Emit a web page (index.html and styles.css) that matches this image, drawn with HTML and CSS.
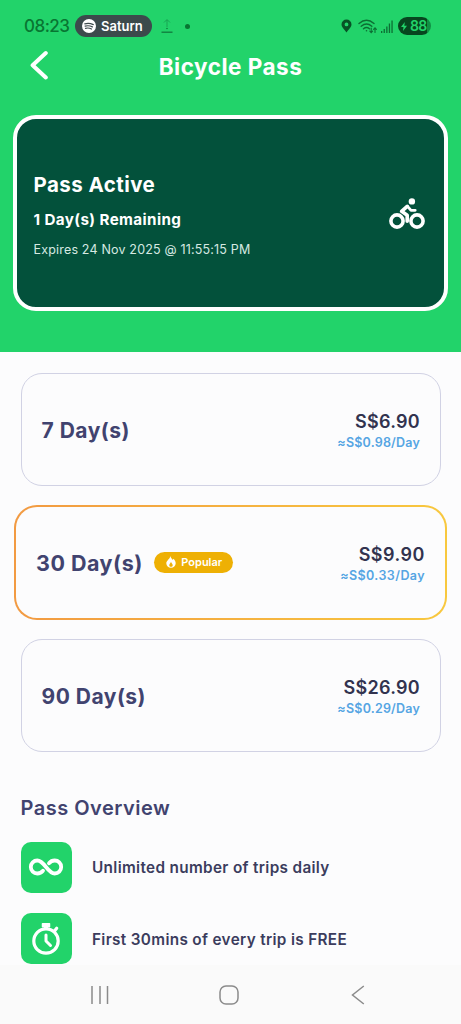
FILE: index.html
```html
<!DOCTYPE html>
<html lang="en">
<head>
<meta charset="utf-8">
<meta name="viewport" content="width=device-width, initial-scale=1">
<title>Bicycle Pass</title>
<link rel="stylesheet" href="styles.css">
</head>
<body>
<div class="screen">
  <header class="hero">
    <div class="status">
      <span class="clock">08:23</span>
      <span class="now-playing">
        <svg width="14" height="14" viewBox="0 0 14 14"><circle cx="7" cy="7" r="7" fill="#fff"/><path d="M2.8 4.8q4.4-1.2 8.5 .8M3.1 7.1q4-1 7.3 .8M3.5 9.3q3.200-.8 6 .7" fill="none" stroke="#3c4a4c" stroke-width="1.2" stroke-linecap="round"/></svg>
        <span class="track">Saturn</span>
      </span>
      <svg class="upload" width="12" height="16" viewBox="0 0 12 16" fill="none" stroke="#107a3d"><path d="M.5 14.200h11" stroke-width="1.300"/><path d="M3 4.500L6 1.500l3 3M6 2v7" stroke-width="1" opacity=".5"/><circle cx="6" cy="10.500" r=".4"/></svg>
      <span class="dot"></span>
      <span class="indicators">
        <svg class="pin" width="11" height="14" viewBox="0 0 11 14"><path fill="#075226" fill-rule="evenodd" d="M5.500 .5a5 5 0 0 1 5 5c0 3-3.300 5-5 8-1.700-3-5-5-5-8a5 5 0 0 1 5-5zm0 3a1.900 1.900 0 1 0 0 3.800 1.900 1.900 0 0 0 0-3.800z"/></svg>
        <svg class="wifi" width="20" height="15" viewBox="0 0 20 15" fill="none" stroke="#0c6e33" stroke-linecap="round"><path d="M1 4.500q7.500-6.500 15 0M3.200 7.300q5.300-4.500 10.600 0M5.500 9.700q3-2.400 6 0" stroke-width="1.400"/><circle cx="8.500" cy="11.700" r=".8" fill="#0c6e33" stroke="none"/><path d="M13.200 9v4.500m-1.400-1.400l1.400 1.500 1.400-1.500M17 13.500V9m-1.400 1.400L17 8.900l1.400 1.500" stroke-width="1.100"/></svg>
        <svg class="signal" width="12" height="13" viewBox="0 0 12 13" fill="#0c6e33"><rect y="11" width="1.300" height="2"/><rect x="2.600" y="9" width="1.300" height="4"/><rect x="5.200" y="6.500" width="1.300" height="6.500"/><rect x="7.800" y="3.500" width="1.300" height="9.500"/><rect x="10.400" y=".5" width="1.300" height="12.500"/></svg>
        <span class="battery"><svg width="6" height="9" viewBox="0 0 6 9"><path fill="#22d36a" d="M3.800 0L0 5h2.500L2 9l4-5.300H3.300z"/></svg><span class="charge">88</span></span>
      </span>
    </div>
    <div class="titlebar">
      <svg class="back" width="18" height="30" viewBox="0 0 18 30"><path d="M15.800 3L2.600 15.200l13.200 12.300" fill="none" stroke="#fff" stroke-width="4" stroke-linecap="round" stroke-linejoin="round"/></svg>
      <h1 class="title">Bicycle Pass</h1>
    </div>
    <section class="pass">
      <div class="pass-info">
        <h2 class="pass-state">Pass Active</h2>
        <p class="pass-left">1 Day(s) Remaining</p>
        <p class="pass-expiry">Expires 24 Nov 2025 @ 11:55:15 PM</p>
      </div>
      <svg class="rider" width="36" height="32" viewBox="0 0 36 32" fill="none" stroke="#fff"><circle cx="8" cy="23" r="6.100" stroke-width="3.600"/><circle cx="28" cy="23" r="6.100" stroke-width="3.600"/><circle cx="22.900" cy="3.400" r="3.200" fill="#fff" stroke="none"/><path d="M18.800 8.600l3.200 3.700h4.200" stroke-width="2.800" stroke-linecap="round" stroke-linejoin="round"/><path d="M18.200 8.300l-5.600 5 5.600 3.900v6" stroke-width="3.600" stroke-linecap="round" stroke-linejoin="round"/></svg>
    </section>
  </header>

  <main class="content">
    <article class="plan">
      <h3 class="plan-name">7 Day(s)</h3>
      <div class="cost"><span class="price">S$6.90</span><span class="rate">≈S$0.98/Day</span></div>
    </article>
    <article class="plan featured">
      <h3 class="plan-name">30 Day(s)</h3>
      <span class="badge"><svg width="10" height="12" viewBox="0 0 10 12"><path fill="#fff" fill-rule="evenodd" d="M4.400 0c.3 2 1.600 2.800 2.300 3.900l.9-1.200C9 4.300 9.700 5.700 9.700 7.300 9.700 10 7.600 11.800 5 11.800S.3 10 .3 7.300C.3 4.500 3.800 3.300 4.400 0zM5 5.800C4.600 7.300 3.300 7.700 3.300 9.200c0 1 .8 1.600 1.700 1.600s1.700-.6 1.700-1.600C6.700 7.700 5.400 7.300 5 5.800z"/></svg><span>Popular</span></span>
      <div class="cost"><span class="price">S$9.90</span><span class="rate">≈S$0.33/Day</span></div>
    </article>
    <article class="plan">
      <h3 class="plan-name">90 Day(s)</h3>
      <div class="cost"><span class="price">S$26.90</span><span class="rate">≈S$0.29/Day</span></div>
    </article>

    <h2 class="overview">Pass Overview</h2>
    <ul class="perks">
      <li class="perk">
        <span class="tile"><svg width="36" height="20" viewBox="0 0 36 20" fill="none" stroke="#fff" stroke-width="3.800" stroke-linecap="round"><path d="M15 13.800C13.500 15.600 12 16.500 9.300 16.500a6.500 6.500 0 0 1 0-13c7.200 0 10.200 13 17.400 13a6.500 6.500 0 0 0 0-13c-2.700 0-4.200 .9-5.700 2.700"/></svg></span>
        <span class="perk-text">Unlimited number of trips daily</span>
      </li>
      <li class="perk">
        <span class="tile"><svg width="30" height="34" viewBox="0 0 30 34" fill="none" stroke="#fff"><circle cx="15" cy="19" r="12.200" stroke-width="3.200"/><path d="M11.500 1.800h7v3h-7z" fill="#fff" stroke-width="1.500" stroke-linejoin="round"/><path d="M15 4v3" stroke-width="4"/><path d="M23.500 9l2.200-2.800" stroke-width="3.200" stroke-linecap="round"/><path d="M15 13v6l4.500 4.500" stroke-width="3" stroke-linecap="round" stroke-linejoin="round"/></svg></span>
        <span class="perk-text">First 30mins of every trip is FREE</span>
      </li>
    </ul>
  </main>

  <nav class="navbar">
    <svg width="20" height="20" viewBox="0 0 20 20"><path d="M2 1v18M10 1v18M17.500 1v18" stroke="#8b8b8b" stroke-width="1.500"/></svg>
    <svg class="home" width="20" height="20" viewBox="0 0 20 20"><rect x="1" y="1" width="18" height="18" rx="6" fill="none" stroke="#8b8b8b" stroke-width="1.500"/></svg>
    <svg width="14" height="20" viewBox="0 0 14 20"><path d="M12.800 1L1.500 10l11.300 9" fill="none" stroke="#8b8b8b" stroke-width="1.500"/></svg>
  </nav>
</div>
</body>
</html>
```

FILE: styles.css
```css
* { box-sizing: border-box; margin: 0; padding: 0; }
body { font-family: Inter, "Liberation Sans", sans-serif; background: #fcfcfd; }
svg { display: block; flex: none; }
.screen { width: 461px; height: 1024px; display: flex; flex-direction: column; overflow: hidden; }

.hero { height: 352px; flex: none; background: #22d36a; padding: 14px 13px 0; color: #fff; }
.status { height: 24px; display: flex; align-items: center; padding: 0 17px 0 11px; }
.clock { width: 50px; font-size: 17px; line-height: 22px; font-weight: 500; letter-spacing: -.5px; color: #087632; }
.now-playing { width: 77px; height: 22px; border-radius: 11px; background: #3c4a4c; display: flex; align-items: center; gap: 5px; padding-left: 7px; margin-left: 1px; }
.track { font-size: 13px; font-weight: 600; }
.upload { margin-left: 9px; }
.dot { width: 5px; height: 5px; border-radius: 50%; background: #087632; margin-left: 12px; }
.indicators { display: flex; align-items: center; margin-left: auto; }
.wifi { margin-left: 6px; }
.signal { margin-left: 3px; }
.battery { width: 33px; height: 18px; border-radius: 9px; background: linear-gradient(90deg, #07461f 88%, #109044 88%); display: flex; align-items: center; gap: 3px; padding-left: 3px; margin-left: 5px; }
.charge { font-size: 14px; line-height: 18px; font-weight: 600; letter-spacing: -.8px; color: #22d36a; }

.titlebar { height: 77px; display: grid; grid-template-columns: 40px 1fr 40px; align-items: start; padding-top: 12px; }
.back { margin-left: 17px; }
.title { font-size: 22.5px; line-height: 33px; font-weight: 700; text-align: center; letter-spacing: .5px; white-space: nowrap; }

.pass { height: 196px; border: 4px solid #fff; border-radius: 23px; background: #03513b; display: flex; align-items: center; justify-content: space-between; padding: 0 19px 0 16.5px; }
.pass-info { display: flex; flex-direction: column; padding-top: 4px; }
.pass-state { font-size: 20.5px; line-height: 25px; font-weight: 700; letter-spacing: .45px; }
.pass-left { font-size: 15.2px; line-height: 20px; font-weight: 700; margin-top: 13px; letter-spacing: .4px; }
.pass-expiry { font-size: 12.5px; line-height: 18px; margin-top: 11px; color: #d6e9e2; letter-spacing: .18px; }
.rider { margin-top: 2px; }

.content { flex: 1; min-height: 0; overflow: hidden; padding: 21px 20px 0 20.5px; }
.plan { height: 113px; border: 1px solid #d1d2e4; border-radius: 21px; margin: 0 0 19px; padding: 1px 20px 0; display: flex; align-items: center; }
.featured { height: 115px; margin: 0 -6px 19px -6.5px; border: 2px solid transparent; border-radius: 23px; background: linear-gradient(#fcfcfd, #fcfcfd) padding-box, linear-gradient(90deg, #f29a42, #f8c83e) border-box; }
.plan-name { font-size: 21px; line-height: 26px; font-weight: 700; padding-top: 1px; color: #41436f; letter-spacing: .5px; white-space: nowrap; }
.featured .plan-name { font-size: 21.5px; padding-top: 0; }
.badge { width: 79px; height: 21px; border-radius: 11px; background: #eeb004; color: #fff; font-size: 11px; font-weight: 600; display: flex; align-items: center; gap: 5px; padding-left: 12px; margin: 0 0 2px 11.5px; }
.cost { margin-left: auto; display: flex; flex-direction: column; align-items: flex-end; padding-top: 1px; }
.price { font-size: 18px; line-height: 24px; font-weight: 600; color: #32334f; letter-spacing: .3px; }
.rate { font-size: 12.5px; line-height: 18px; font-weight: 600; color: #55a5e3; letter-spacing: .2px; }
.featured .price { letter-spacing: .5px; }
.featured .rate { letter-spacing: .42px; }

.overview { font-size: 20px; line-height: 26px; font-weight: 600; color: #41436f; letter-spacing: .5px; margin-top: 42.5px; }
.perks { list-style: none; display: flex; flex-direction: column; gap: 20.5px; margin-top: 21px; }
.perk { display: flex; align-items: center; gap: 20.5px; }
.tile { width: 51px; height: 51px; border-radius: 10px; background: #22d36a; display: flex; align-items: center; justify-content: center; }
.perk-text { font-size: 15.3px; line-height: 20px; padding-top: 2px; font-weight: 600; color: #3b3c5d; white-space: nowrap; letter-spacing: .34px; }

.navbar { height: 59px; flex: none; background: #fafafa; display: flex; align-items: center; justify-content: space-between; padding: 0 96px 0 90px; }
.home { margin-right: 4px; }
```
